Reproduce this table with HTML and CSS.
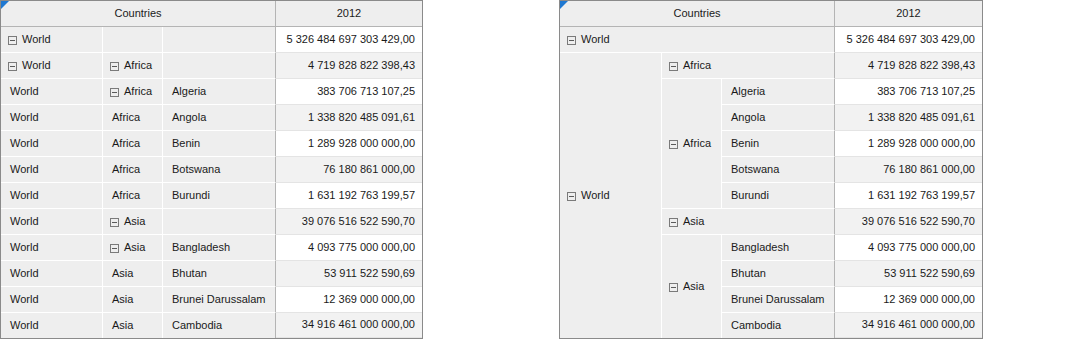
FILE: index.html
```html
<!DOCTYPE html>
<html>
<head>
<meta charset="utf-8">
<link rel="stylesheet" href="styles.css">
</head>
<body>
<div class="page">
  <div class="pivot pivot-flat">
    <div class="corner"></div>
    <div class="hd hd-dims">Countries</div>
    <div class="hd hd-val">2012</div>

    <div class="c"><svg class="tg" viewBox="0 0 9 9"><rect x="0.5" y="0.5" width="8" height="8"/><line x1="2" y1="4.5" x2="7" y2="4.5"/></svg>World</div>
    <div class="c"></div>
    <div class="c c-end"></div>
    <div class="v">5 326 484 697 303 429,00</div>

    <div class="c"><svg class="tg" viewBox="0 0 9 9"><rect x="0.5" y="0.5" width="8" height="8"/><line x1="2" y1="4.5" x2="7" y2="4.5"/></svg>World</div>
    <div class="c"><svg class="tg" viewBox="0 0 9 9"><rect x="0.5" y="0.5" width="8" height="8"/><line x1="2" y1="4.5" x2="7" y2="4.5"/></svg>Africa</div>
    <div class="c c-end"></div>
    <div class="v v-alt">4 719 828 822 398,43</div>

    <div class="c c-txt">World</div>
    <div class="c"><svg class="tg" viewBox="0 0 9 9"><rect x="0.5" y="0.5" width="8" height="8"/><line x1="2" y1="4.5" x2="7" y2="4.5"/></svg>Africa</div>
    <div class="c c-txt c-end">Algeria</div>
    <div class="v">383 706 713 107,25</div>

    <div class="c c-txt">World</div>
    <div class="c c-txt">Africa</div>
    <div class="c c-txt c-end">Angola</div>
    <div class="v v-alt">1 338 820 485 091,61</div>

    <div class="c c-txt">World</div>
    <div class="c c-txt">Africa</div>
    <div class="c c-txt c-end">Benin</div>
    <div class="v">1 289 928 000 000,00</div>

    <div class="c c-txt">World</div>
    <div class="c c-txt">Africa</div>
    <div class="c c-txt c-end">Botswana</div>
    <div class="v v-alt">76 180 861 000,00</div>

    <div class="c c-txt">World</div>
    <div class="c c-txt">Africa</div>
    <div class="c c-txt c-end">Burundi</div>
    <div class="v">1 631 192 763 199,57</div>

    <div class="c c-txt">World</div>
    <div class="c"><svg class="tg" viewBox="0 0 9 9"><rect x="0.5" y="0.5" width="8" height="8"/><line x1="2" y1="4.5" x2="7" y2="4.5"/></svg>Asia</div>
    <div class="c c-end"></div>
    <div class="v v-alt">39 076 516 522 590,70</div>

    <div class="c c-txt">World</div>
    <div class="c"><svg class="tg" viewBox="0 0 9 9"><rect x="0.5" y="0.5" width="8" height="8"/><line x1="2" y1="4.5" x2="7" y2="4.5"/></svg>Asia</div>
    <div class="c c-txt c-end">Bangladesh</div>
    <div class="v">4 093 775 000 000,00</div>

    <div class="c c-txt">World</div>
    <div class="c c-txt">Asia</div>
    <div class="c c-txt c-end">Bhutan</div>
    <div class="v v-alt">53 911 522 590,69</div>

    <div class="c c-txt">World</div>
    <div class="c c-txt">Asia</div>
    <div class="c c-txt c-end">Brunei Darussalam</div>
    <div class="v">12 369 000 000,00</div>

    <div class="c c-txt c-nob">World</div>
    <div class="c c-txt c-nob">Asia</div>
    <div class="c c-txt c-end c-nob">Cambodia</div>
    <div class="v v-alt c-nob">34 916 461 000 000,00</div>
  </div>

  <div class="pivot pivot-tree">
    <div class="corner"></div>
    <div class="hd hd-dims">Countries</div>
    <div class="hd hd-val">2012</div>

    <div class="c c-end span3"><svg class="tg" viewBox="0 0 9 9"><rect x="0.5" y="0.5" width="8" height="8"/><line x1="2" y1="4.5" x2="7" y2="4.5"/></svg>World</div>
    <div class="v">5 326 484 697 303 429,00</div>

    <div class="c c-nob world-all"><svg class="tg" viewBox="0 0 9 9"><rect x="0.5" y="0.5" width="8" height="8"/><line x1="2" y1="4.5" x2="7" y2="4.5"/></svg>World</div>

    <div class="c c-end span2"><svg class="tg" viewBox="0 0 9 9"><rect x="0.5" y="0.5" width="8" height="8"/><line x1="2" y1="4.5" x2="7" y2="4.5"/></svg>Africa</div>
    <div class="v v-alt">4 719 828 822 398,43</div>

    <div class="c africa-all"><svg class="tg" viewBox="0 0 9 9"><rect x="0.5" y="0.5" width="8" height="8"/><line x1="2" y1="4.5" x2="7" y2="4.5"/></svg>Africa</div>
    <div class="c c-txt c-end">Algeria</div>
    <div class="v">383 706 713 107,25</div>
    <div class="c c-txt c-end">Angola</div>
    <div class="v v-alt">1 338 820 485 091,61</div>
    <div class="c c-txt c-end">Benin</div>
    <div class="v">1 289 928 000 000,00</div>
    <div class="c c-txt c-end">Botswana</div>
    <div class="v v-alt">76 180 861 000,00</div>
    <div class="c c-txt c-end">Burundi</div>
    <div class="v">1 631 192 763 199,57</div>

    <div class="c c-end span2"><svg class="tg" viewBox="0 0 9 9"><rect x="0.5" y="0.5" width="8" height="8"/><line x1="2" y1="4.5" x2="7" y2="4.5"/></svg>Asia</div>
    <div class="v v-alt">39 076 516 522 590,70</div>

    <div class="c c-nob asia-all"><svg class="tg" viewBox="0 0 9 9"><rect x="0.5" y="0.5" width="8" height="8"/><line x1="2" y1="4.5" x2="7" y2="4.5"/></svg>Asia</div>
    <div class="c c-txt c-end">Bangladesh</div>
    <div class="v">4 093 775 000 000,00</div>
    <div class="c c-txt c-end">Bhutan</div>
    <div class="v v-alt">53 911 522 590,69</div>
    <div class="c c-txt c-end">Brunei Darussalam</div>
    <div class="v">12 369 000 000,00</div>
    <div class="c c-txt c-end c-nob">Cambodia</div>
    <div class="v v-alt c-nob">34 916 461 000 000,00</div>
  </div>
</div>
</body>
</html>
```

FILE: styles.css
```css
* {
  box-sizing: border-box;
}

html, body {
  margin: 0;
  padding: 0;
  background: #ffffff;
}

body {
  font-family: "Liberation Sans", Arial, sans-serif;
  font-size: 11px;
  color: #1a1a1a;
}

.page {
  display: flex;
  align-items: flex-start;
  gap: 136px;
}

.pivot {
  position: relative;
  display: grid;
  grid-template-rows: repeat(12, 26px) 25px;
  border: 1px solid #8a8a8a;
  background: #eeeeee;
}

.pivot-flat {
  grid-template-columns: 102px 60px 113px 146px;
}

.pivot-tree {
  grid-template-columns: 102px 60px 113px 147px;
}

.corner {
  position: absolute;
  left: 0;
  top: 0;
  width: 0;
  height: 0;
  border-top: 8px solid #1f78d1;
  border-right: 8px solid transparent;
}

.hd {
  display: flex;
  align-items: center;
  justify-content: center;
  padding-bottom: 2px;
  background: #eeeeee;
  border-bottom: 1px solid #b4b4b4;
}

.hd-dims {
  grid-column: 1 / span 3;
  border-right: 1px solid #b4b4b4;
}

.c {
  display: flex;
  align-items: center;
  padding-left: 7px;
  padding-bottom: 2px;
  white-space: nowrap;
  overflow: hidden;
  background: #eeeeee;
  border-right: 1px solid #ffffff;
  border-bottom: 1px solid #ffffff;
}

.c-txt {
  padding-left: 9px;
}

.c-end {
  border-right: 1px solid #b4b4b4;
}

.c-nob {
  border-bottom: none;
}

.v {
  display: flex;
  align-items: center;
  justify-content: flex-end;
  padding-right: 7px;
  padding-bottom: 2px;
  background: #ffffff;
  border-bottom: 1px solid #e4e4e4;
  white-space: nowrap;
}

.v-alt {
  background: #f2f2f2;
}

.tg {
  width: 9px;
  height: 9px;
  flex: none;
  margin-right: 5px;
  margin-top: 3px;
}

.tg rect {
  fill: none;
  stroke: #7a7a7a;
  stroke-width: 1;
}

.tg line {
  stroke: #5a5a5a;
  stroke-width: 1;
}

.span3 {
  grid-column: 1 / span 3;
}

.span2 {
  grid-column: 2 / span 2;
}

.world-all {
  grid-column: 1;
  grid-row: 3 / span 11;
}

.africa-all {
  grid-column: 2;
  grid-row: 4 / span 5;
}

.asia-all {
  grid-column: 2;
  grid-row: 10 / span 4;
}
```
